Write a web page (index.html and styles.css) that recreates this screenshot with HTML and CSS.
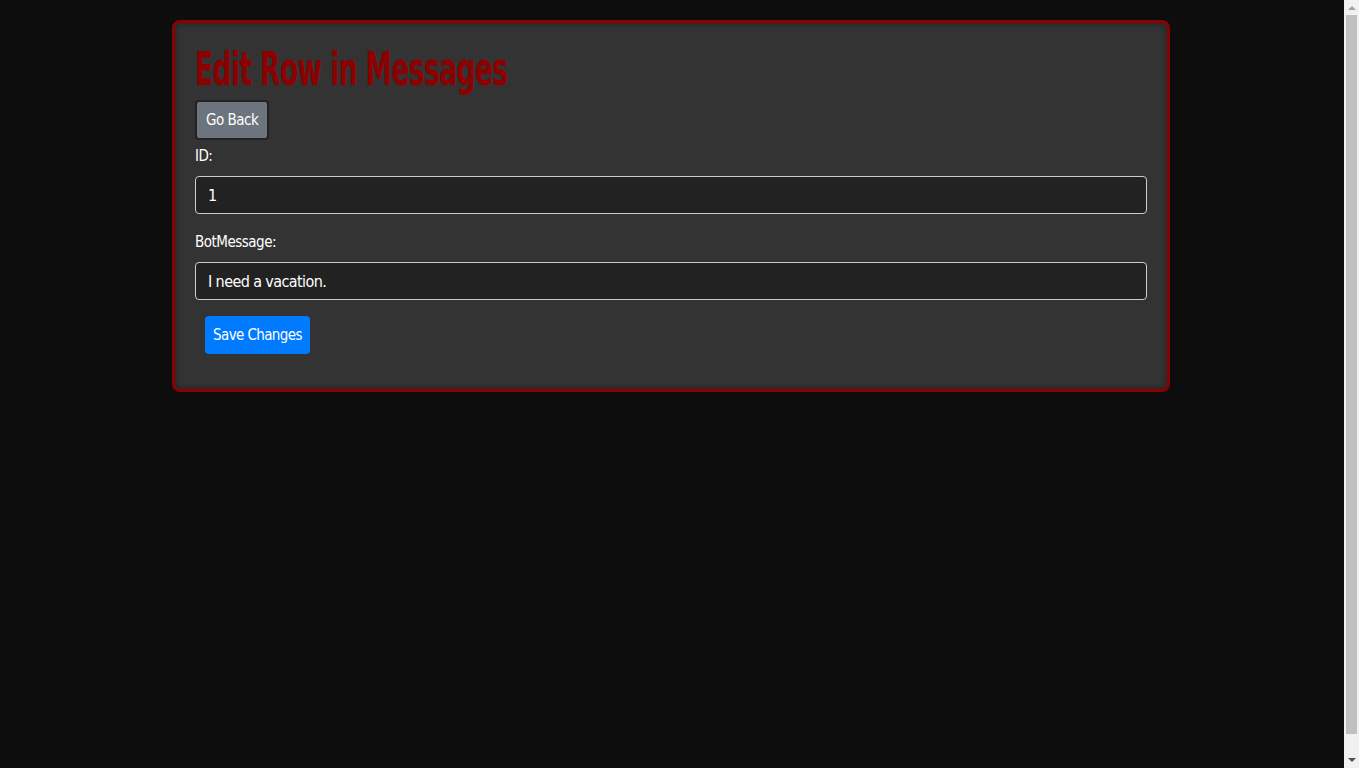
FILE: index.html
```html
<!DOCTYPE html>
<html lang="en">
<head>
    <meta charset="UTF-8">
    <meta name="viewport" content="width=device-width, initial-scale=1.0">
    <title>Edit Row</title>
    <link rel="stylesheet" href="styles.css">
</head>
<body>
    <div class="container">
        <h1><span class="title">Edit Row in Messages</span></h1>
        <button class="back-btn">Go Back</button>
        <form class="edit-form">
            <label for="id">ID:</label>
            <input type="text" id="id" value="1">
            <label for="botMessage">BotMessage:</label>
            <input type="text" id="botMessage" value="I need a vacation.">
            <button type="submit" class="save-btn">Save Changes</button>
        </form>
    </div>

    <div class="scrollbar">
        <span class="arrow up"></span>
        <span class="thumb"></span>
        <span class="arrow down"></span>
    </div>
</body>
</html>
```

FILE: styles.css
```css
body {
    margin: 0;
    padding: 20px 17px 20px 0;
    background: #0d0d0d;
    color: white;
    font-family: "DejaVu Sans Condensed", "Liberation Sans", sans-serif;
    font-size: 15px;
    letter-spacing: -0.5px;
}
.container {
    width: 998px;
    box-sizing: border-box;
    margin: 0 auto;
    background: #333;
    border: 3px solid #8b0000;
    border-radius: 8px;
    padding: 20px;
    box-shadow: inset 0 0 6px rgba(0, 0, 0, 0.4);
}
h1 {
    margin: 0 0 5px;
    font-size: 46px;
    line-height: 52px;
    color: #8b0000;
    letter-spacing: -1px;
}
.title {
    display: inline-block;
    transform: scaleX(0.643);
    transform-origin: left center;
}
.back-btn {
    display: block;
    height: 40px;
    padding: 0 9px;
    background: #6c757d;
    color: white;
    border: 2px solid #222;
    border-radius: 4px;
    font-family: inherit;
    font-size: 15px;
    letter-spacing: -0.5px;
}
.edit-form {
    display: flex;
    flex-direction: column;
    align-items: flex-start;
}
label {
    margin: 5px 0 9px;
    line-height: 22px;
}
input {
    width: 100%;
    box-sizing: border-box;
    height: 38px;
    padding: 0 12px;
    margin: 0 0 12px;
    background: #222;
    color: white;
    border: 1px solid #ccc;
    border-radius: 4px;
    font-family: inherit;
    font-size: 16px;
    letter-spacing: -0.6px;
}
.save-btn {
    margin: 4px 0 15px 10px;
    height: 38px;
    padding: 0 8px;
    background: #007bff;
    color: white;
    border: none;
    border-radius: 4px;
    font-family: inherit;
    font-size: 15px;
    letter-spacing: -0.6px;
}

/* fake browser scrollbar */
.scrollbar {
    position: fixed;
    top: 0;
    right: 0;
    bottom: 0;
    width: 15px;
    background: #f1f1f1;
    display: flex;
    flex-direction: column;
    align-items: center;
}
.arrow {
    width: 0;
    height: 0;
    border-left: 4px solid transparent;
    border-right: 4px solid transparent;
}
.arrow.up {
    margin: 6px 0 5px;
    border-bottom: 4px solid #a3a3a3;
}
.arrow.down {
    margin: 24px 0 6px;
    border-top: 4px solid #505050;
}
.thumb {
    flex: 1;
    width: 11px;
    background: #c1c1c1;
}
```
